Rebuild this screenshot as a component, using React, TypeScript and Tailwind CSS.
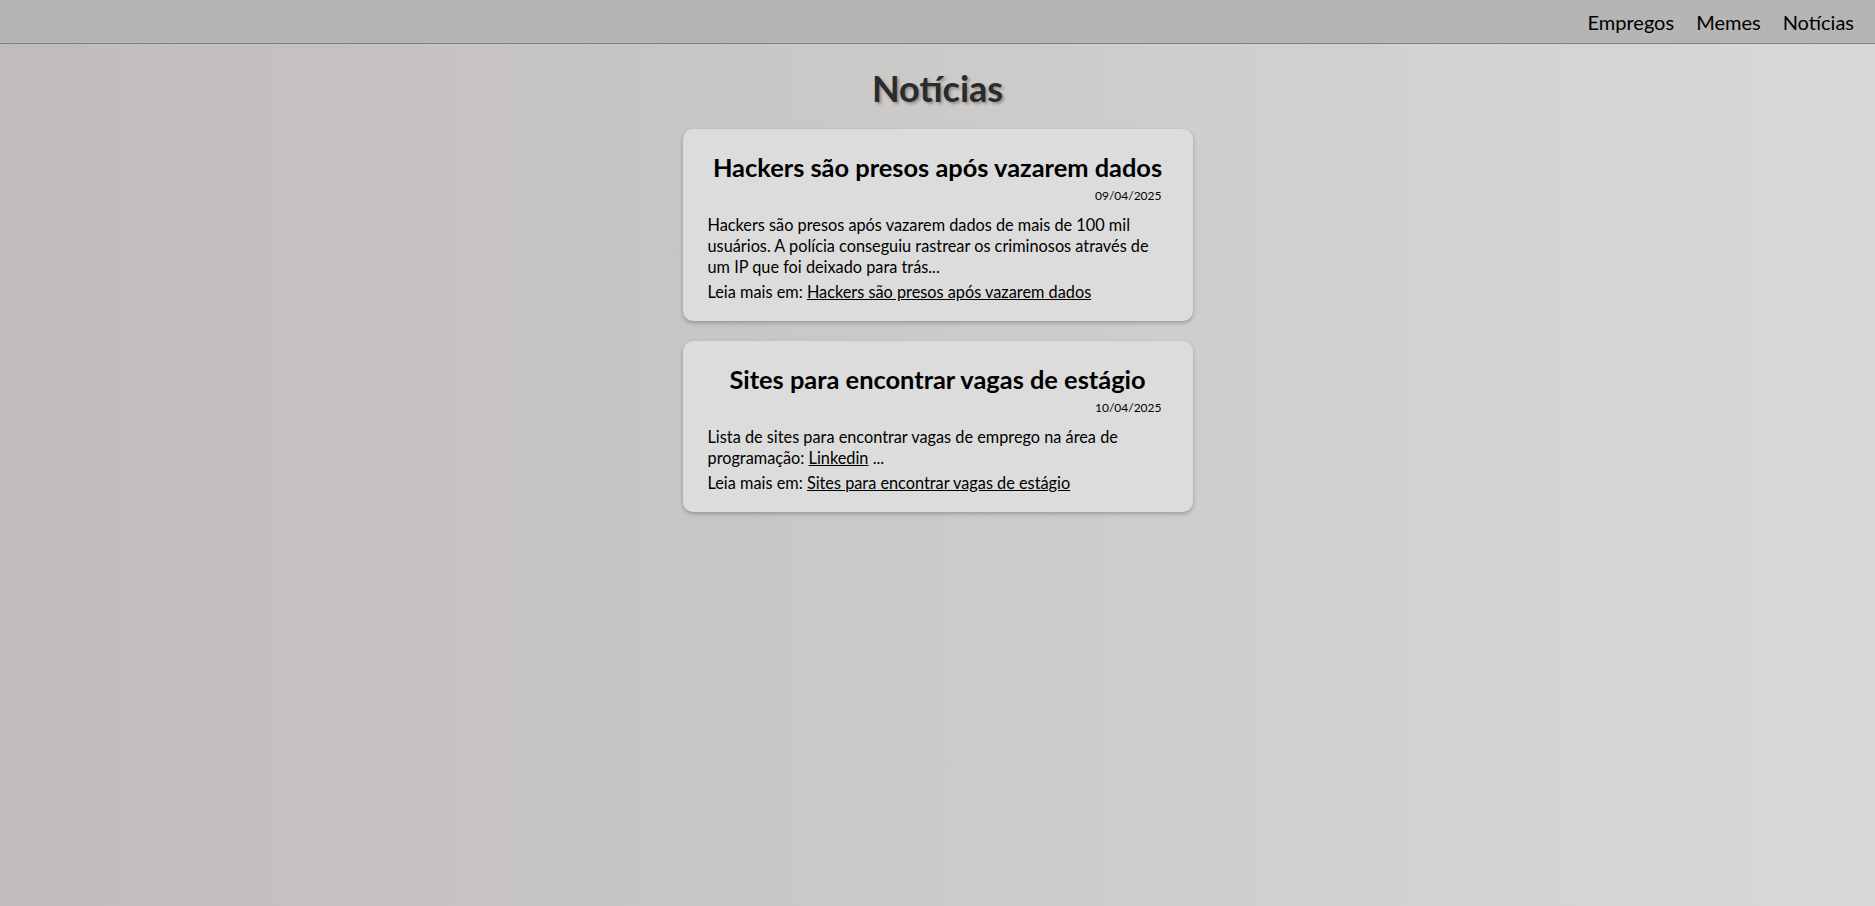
import React from 'react';

interface Noticia {
  titulo: string;
  data: string;
  texto: React.ReactNode;
  link: string;
}

const noticias: Noticia[] = [
  {
    titulo: 'Hackers são presos após vazarem dados',
    data: '09/04/2025',
    texto: (
      <>
        Hackers são presos após vazarem dados de mais de 100 mil usuários. A polícia conseguiu rastrear os criminosos
        através de um IP que foi deixado para trás...
      </>
    ),
    link: 'Hackers são presos após vazarem dados',
  },
  {
    titulo: 'Sites para encontrar vagas de estágio',
    data: '10/04/2025',
    texto: (
      <>
        Lista de sites para encontrar vagas de emprego na área de programação:{' '}
        <a href="#" className="underline">
          Linkedin
        </a>{' '}
        ...
      </>
    ),
    link: 'Sites para encontrar vagas de estágio',
  },
];

const App: React.FC = () => {
  return (
    <div className="min-h-screen bg-[linear-gradient(to_right,#c0bcbb,#d7d9d8)] font-['Lato','Noto_Sans',sans-serif] text-black">
      <header className="flex h-[44px] items-center justify-end gap-[22px] border-b border-[#7f7f7f] bg-[#b5b5b5] pr-[21px] text-[20px]">
        <a href="#">Empregos</a>
        <a href="#">Memes</a>
        <a href="#">Notícias</a>
      </header>

      <main className="flex flex-col items-center">
        <h1 className="mt-[20px] mb-[17px] text-[36px] leading-[48px] font-bold text-[#2b2b2b] [text-shadow:2px_2px_3px_rgba(0,0,0,0.3)]">
          Notícias
        </h1>

        <div className="flex flex-col gap-[20px]">
          {noticias.map((n) => (
            <article
              key={n.titulo}
              className="w-[510px] rounded-[10px] bg-[#dcdcdc] px-[25px] pt-[22px] pb-[19px] shadow-[0_2px_4px_rgba(0,0,0,0.25)]"
            >
              <h2 className="text-center text-[25.4px] leading-[32px] font-bold">{n.titulo}</h2>
              <p className="mt-[5px] pr-[6px] text-right text-[12px] leading-[16px]">{n.data}</p>
              <p className="mt-[10px] text-[16.3px] leading-[21px]">{n.texto}</p>
              <p className="mt-[4px] text-[16.3px] leading-[21px]">
                Leia mais em:{' '}
                <a href="#" className="underline">
                  {n.link}
                </a>
              </p>
            </article>
          ))}
        </div>
      </main>
    </div>
  );
};

export default App;
